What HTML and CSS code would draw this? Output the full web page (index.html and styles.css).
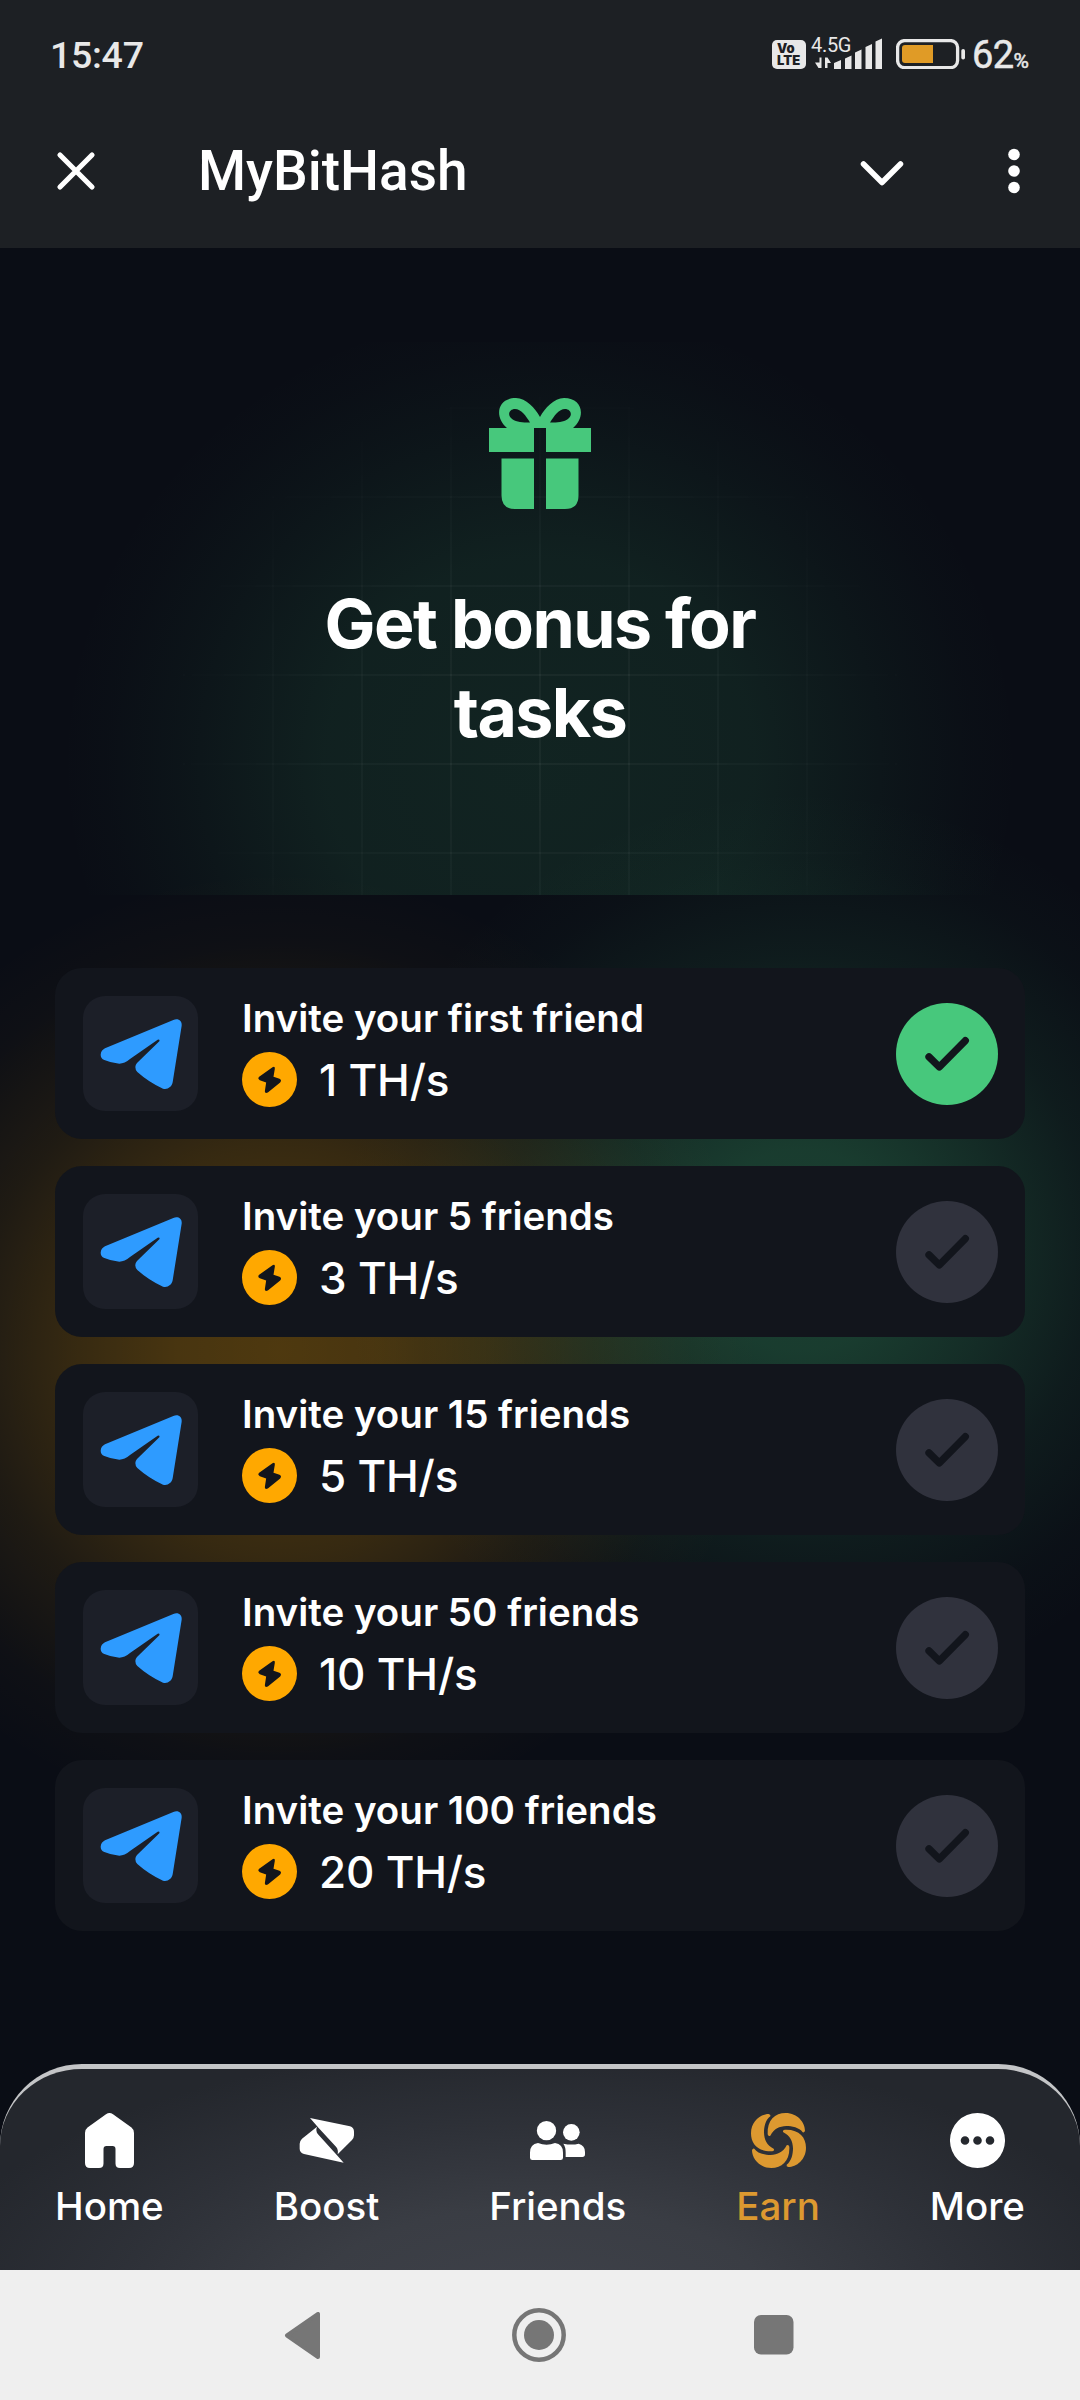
FILE: index.html
```html
<!DOCTYPE html>
<html lang="en">
<head>
<meta charset="utf-8">
<title>MyBitHash</title>
<link rel="stylesheet" href="styles.css">
</head>
<body>
<svg class="defs" aria-hidden="true">
  <symbol id="plane" viewBox="9 18 345 345">
    <path d="M62 194Q63 181 75 175L280 90C294 84 307 92 305 107L278 277C275 292 263 299 249 296Q208 278 172 246Q160 232 171 219L238 154Q241 147 233 149L150 207Q134 221 118 221Q93 219 73 210Q62 205 62 194Z" fill="#2e9bff"/>
  </symbol>
  <symbol id="bolt" viewBox="485.5 185.500 165 165">
    <circle cx="568" cy="268" r="82.500" fill="#ffa800"/>
    <path d="M577 231Q585 227 584 236L580 260L598 266Q606 270 600 277L563 307Q554 311 554 303L558 277L539 270Q531 266 537 260Z" fill="#12151c"/>
  </symbol>
  <symbol id="check" viewBox="0 0 102 102">
    <circle cx="51" cy="51" r="51" fill="currentColor"/>
    <path d="M33 53.800L43.300 64L69.300 37.700" fill="none" stroke="#12151c" stroke-width="7.300" stroke-linecap="round" stroke-linejoin="round"/>
  </symbol>
</svg>
<header class="top">
  <div class="status">
    <span class="time">15:47</span>
    <span class="volte"><b>Vo</b><b>LTE</b></span>
    <span class="network">
      <span class="gen">4.5G</span>
      <svg width="68" height="32" viewBox="814 39 68 32" fill="#e8e8e8">
        <path d="M819.500 58.500h2v10.500h-3l-3.500-5.500h4.500zM825 58.500h2.500l3.500 5.500h-3.500v5h-2.500z"/>
        <path d="M834 64l7-3v9h-7zM845 59.500l6.500-3v13.500H845zM855 53.500l6.500-3V70H855zM865.500 48l6.500-3v25h-6.500zM875.500 42.500l6.500-3V70h-6.500z"/>
      </svg>
    </span>
    <svg class="battery" width="69" height="30" viewBox="896 39 69 30">
      <rect x="897.600" y="40.600" width="60" height="27" rx="7" fill="none" stroke="#e8e8e8" stroke-width="3.300"/>
      <path d="M905 45h28v18h-28q-3 0-3-3V48q0-3 3-3z" fill="#e09b26"/>
      <rect x="961.300" y="49" width="3.700" height="10.500" rx="1.800" fill="#e8e8e8"/>
    </svg>
    <span class="charge">62<small>%</small></span>
  </div>
  <div class="titlebar">
    <svg width="40" height="40" viewBox="0 0 40 40" fill="none" stroke="#fff" stroke-width="5.200" stroke-linecap="round"><path d="M4 4l32 32M36 4L4 36"/></svg>
    <h1>MyBitHash</h1>
    <svg class="chevron" width="44" height="28" viewBox="0 0 44 28" fill="none" stroke="#fff" stroke-width="5.500" stroke-linecap="round" stroke-linejoin="round"><path d="M3.500 4L22 22.500L40.500 4"/></svg>
    <svg class="dots" width="12" height="46" viewBox="0 0 12 46" fill="#fff"><circle cx="6" cy="6.500" r="5.800"/><circle cx="6" cy="23" r="5.800"/><circle cx="6" cy="39.500" r="5.800"/></svg>
  </div>
</header>
<main class="page">
  <section class="hero">
    <svg class="gift" width="102" height="112" viewBox="0 0 102 112" fill="#47c87c">
      <path d="M0 31H18C5 20 8 1 27 1C37 1 46 11 51 20C56 11 65 1 75 1C94 1 97 20 84 31H102V55H57V31H45V55H0ZM41 25.500C37 19 32 12 26 12C21 12 18 17 22 21C26 25 34 26 41 25.500ZM61 25.500C68 26 76 25 80 21C84 17 81 12 76 12C70 12 65 19 61 25.500Z" fill-rule="evenodd"/>
      <path d="M12.500 61.500H45V112H26Q12.500 112 12.500 98.500ZM57 61.500H89.500V98.500Q89.500 112 76 112H57Z"/>
    </svg>
    <h2>Get bonus for<br>tasks</h2>
  </section>
  <section class="tasks">
    <article class="task done">
      <span class="tile"><svg><use href="#plane"/></svg></span>
      <div class="info"><h3>Invite your first friend</h3><p><svg><use href="#bolt"/></svg>1 TH/s</p></div>
      <svg class="check"><use href="#check"/></svg>
    </article>
    <article class="task">
      <span class="tile"><svg><use href="#plane"/></svg></span>
      <div class="info"><h3>Invite your 5 friends</h3><p><svg><use href="#bolt"/></svg>3 TH/s</p></div>
      <svg class="check"><use href="#check"/></svg>
    </article>
    <article class="task">
      <span class="tile"><svg><use href="#plane"/></svg></span>
      <div class="info"><h3>Invite your 15 friends</h3><p><svg><use href="#bolt"/></svg>5 TH/s</p></div>
      <svg class="check"><use href="#check"/></svg>
    </article>
    <article class="task">
      <span class="tile"><svg><use href="#plane"/></svg></span>
      <div class="info"><h3>Invite your 50 friends</h3><p><svg><use href="#bolt"/></svg>10 TH/s</p></div>
      <svg class="check"><use href="#check"/></svg>
    </article>
    <article class="task">
      <span class="tile"><svg><use href="#plane"/></svg></span>
      <div class="info"><h3>Invite your 100 friends</h3><p><svg><use href="#bolt"/></svg>20 TH/s</p></div>
      <svg class="check"><use href="#check"/></svg>
    </article>
  </section>
  <nav class="tabs">
    <a><svg viewBox="0 0 55 55"><path d="M24 1.200Q27.500 -1 31 1.200L49.500 14.500Q52 16.500 52 20V50Q52 55 47 55H38Q33.500 55 33.500 50.500V36Q33.500 33 30.500 33H24.500Q21.500 33 21.500 36V50.500Q21.500 55 17 55H8Q3 55 3 50V20Q3 16.500 5.500 14.500Z"/></svg>Home</a>
    <a><svg viewBox="25 39 165 165"><path d="M58 54L178 79Q190 83 190 95V106Q190 113 184 120L141 163Q144 149 136 140L84 84Z"/><path d="M159 188L40 162Q27 157 27 146V131Q27 123 34 116L79 80Q74 93 82 103L135 161Z"/></svg>Boost</a>
    <a><svg viewBox="30 39 165 165"><circle cx="79.500" cy="92" r="29"/><circle cx="154" cy="97" r="25"/><path d="M54 129Q80 139 105 129Q129 132 129 158V173Q129 180 122 180H37Q30 180 30 173V158Q30 132 54 129ZM130 131Q155 136 176 131Q195 136 195 156V163Q195 171 187 171H137V158Q137 140 130 131Z"/></svg>Friends</a>
    <a class="active"><svg viewBox="693 39 165 165"><g id="blade"><path d="M743 103C741 60 765 39 797 39C833 39 855 68 855 92Q853 99 848 97C838 82 815 78 799 78C778 79 762 86 751 107Q745 111 743 103Z"/></g><use href="#blade" transform="rotate(90 775.500 121.500)"/><use href="#blade" transform="rotate(180 775.500 121.500)"/><use href="#blade" transform="rotate(270 775.500 121.500)"/></svg>Earn</a>
    <a><svg viewBox="0 0 55 55"><path fill-rule="evenodd" d="M27.500 0a27.500 27.500 0 1 0 0 55a27.500 27.500 0 1 0 0-55ZM15 23.200a4.300 4.300 0 1 1 0 8.600a4.300 4.300 0 1 1 0-8.600ZM27.500 23.200a4.300 4.300 0 1 1 0 8.600a4.300 4.300 0 1 1 0-8.600ZM40 23.200a4.300 4.300 0 1 1 0 8.600a4.300 4.300 0 1 1 0-8.600Z"/></svg>More</a>
  </nav>
</main>
<footer class="system">
  <svg width="37" height="47" viewBox="0 0 37 47"><path d="M34 2V45L3 23.500Z" fill="#767676" stroke="#767676" stroke-width="4" stroke-linejoin="round"/></svg>
  <svg width="54" height="54" viewBox="0 0 54 54"><circle cx="27" cy="27" r="24.700" fill="none" stroke="#767676" stroke-width="4.500"/><circle cx="27" cy="27" r="15" fill="#767676"/></svg>
  <svg width="40" height="40" viewBox="0 0 40 40"><rect width="39.500" height="39.500" rx="7" fill="#767676"/></svg>
</footer>
</body>
</html>
```
FILE: styles.css
```css
* { box-sizing: border-box; }
body { margin: 0; width: 1080px; height: 2400px; display: flex; flex-direction: column; background: #0a0d15; color: #fff; font-family: Inter, "Liberation Sans", sans-serif; overflow: hidden; }
h1, h2, h3, p { margin: 0; }
svg { display: block; flex: none; }
.defs { display: none; }

.top { height: 248px; background: #1d2024; font-family: Roboto, "Liberation Sans", sans-serif; }
.status { height: 108px; display: flex; align-items: center; padding: 0 50px 0 50px; color: #e8e8e8; }
.time { font-size: 37.5px; font-weight: 500; margin-right: auto; padding-top: 2px; letter-spacing: -.3px; }
.volte { width: 34px; height: 29px; margin-right: 8px; padding: 2px 0 0 5px; border-radius: 5px; background: #e8e8e8; color: #1d2024; font: 800 13px/12.5px Inter, sans-serif; display: flex; flex-direction: column; }
.network { position: relative; margin-right: 14px; }
.gen { position: absolute; left: -3px; top: -4px; font-size: 20px; line-height: 22px; letter-spacing: -.3px; }
.battery { margin-right: 7px; }
.charge { font-size: 38px; font-weight: 400; width: 58px; white-space: nowrap; letter-spacing: -.6px; padding-top: 2px; -webkit-text-stroke: .5px; }
.charge small { font-size: 21px; }
.titlebar { display: flex; align-items: center; height: 126px; padding: 0 60px 0 56px; }
.titlebar h1 { font-size: 55px; font-weight: 500; margin-left: 102px; line-height: 64px; }
.chevron { margin: 5px 104px 0 auto; }

.page { height: 2022px; display: flex; flex-direction: column; background:
  radial-gradient(circle 480px at 280px 1102px, rgba(255,170,0,.28) 0, rgba(255,170,0,.255) 21%, rgba(255,170,0,.18) 43%, rgba(255,170,0,.085) 64%, rgba(255,170,0,.02) 85%, transparent),
  radial-gradient(circle 460px at 800px 1002px, rgba(71,200,124,.27) 0, rgba(71,200,124,.25) 22%, rgba(71,200,124,.17) 43%, rgba(71,200,124,.08) 64%, rgba(71,200,124,.02) 85%, transparent),
  #0a0d15; }
.hero { position: relative; height: 553px; margin: 94px 0 73px; padding-top: 55px; display: flex; flex-direction: column; align-items: center; background: radial-gradient(ellipse 480px 460px at 540px 420px, rgba(71,200,124,.12) 0, rgba(71,200,124,.105) 45%, rgba(71,200,124,.04) 75%, rgba(71,200,124,.01) 90%, transparent); }
.hero::before { content: ""; position: absolute; inset: 0; background: repeating-linear-gradient(90deg, rgba(255,255,255,.04) 0 2px, transparent 2px 89px) 5px 0, repeating-linear-gradient(180deg, transparent 0 65px, rgba(255,255,255,.04) 65px 67px, transparent 67px 89px); -webkit-mask: radial-gradient(ellipse 400px 370px at 540px 380px, #000 20%, transparent); mask: radial-gradient(ellipse 400px 370px at 540px 380px, #000 20%, transparent); }
.gift { position: relative; }
.hero h2 { position: relative; margin-top: 70px; font-size: 68px; line-height: 89px; font-weight: 700; text-align: center; letter-spacing: -1.55px; }

.tasks { display: flex; flex-direction: column; gap: 27px; padding: 0 55px; }
.task { height: 171px; border-radius: 27px; background: #12151c; display: flex; align-items: center; padding: 0 27px 0 28px; color: #30323d; }
.tile { width: 115px; height: 115px; border-radius: 22px; background: #1c1f28; }
.tile svg { width: 115px; height: 115px; }
.info { margin-left: 44px; margin-right: auto; color: #fff; }
.info h3 { font-size: 38.5px; line-height: 46px; margin-bottom: 8px; font-weight: 600; }
.info p { display: flex; align-items: center; gap: 22px; font-size: 44px; line-height: 62px; margin-bottom: 2px; font-weight: 500; letter-spacing: -.2px; }
.info p svg { width: 55px; height: 55px; }
.check { width: 102px; height: 102px; }
.done { color: #47c87c; }

.tabs { margin-top: auto; height: 206px; border-top: 5px solid #c4c5c7; border-radius: 82px 82px 0 0; padding: 44px 55px 0; display: flex; justify-content: space-between; background: radial-gradient(ellipse 560px 230px at 540px 230px, #3e4149 0, #3a3d44 40%, #2e3138 75%, #24272d 110%); }
.tabs a { display: flex; flex-direction: column; align-items: center; gap: 15px; font-size: 38.5px; line-height: 46px; font-weight: 500; }
.tabs svg { width: 55px; height: 55px; fill: currentColor; }
.tabs .active { color: #dd9930; }

.system { height: 130px; background: #efefef; display: flex; align-items: center; padding-left: 284px; }
.system svg:nth-child(2) { margin: 0 188px 0 191px; }
```
